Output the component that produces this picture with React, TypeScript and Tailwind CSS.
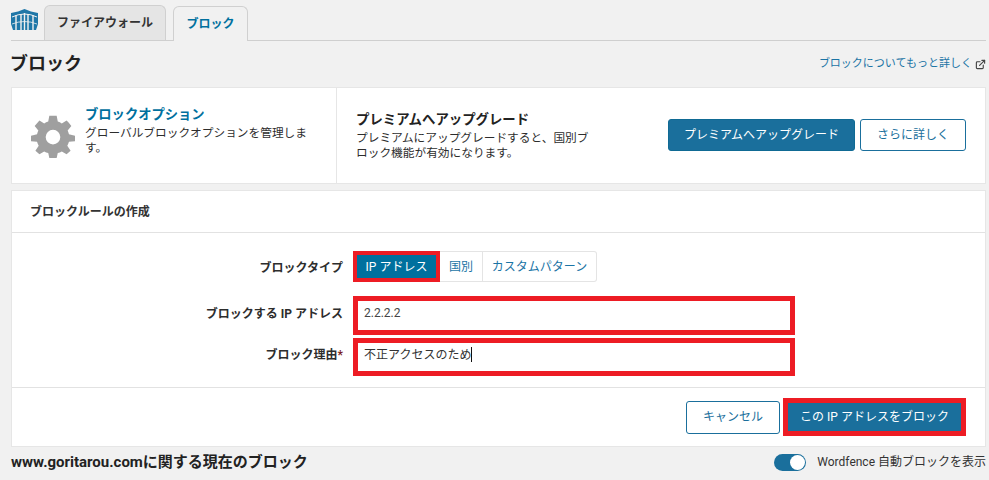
import React from 'react';
import { ExternalLink } from 'lucide-react';

const FONT = "font-['Roboto','Noto_Sans_CJK_JP',sans-serif]";

const Logo = () => (
    <svg width="27" height="22" viewBox="0 0 27 22" className="shrink-0">
        <path d="M0 4 L7 2.5 L13.5 0 L20 2.5 L27 4 L27 15 L25 21 L2 21 L0 15 Z" fill="#1f77a8" />
        <path d="M1 8 Q13.5 2 26 8" stroke="#f1f1f1" strokeWidth="1" fill="none" />
        <path d="M5 6 V21 M10 5 V21 M13.5 4 V21 M17 5 V21 M22 6 V21" stroke="#f1f1f1" strokeWidth="1.4" fill="none" />
        <path d="M1 15 Q13.5 10 26 15" stroke="#f1f1f1" strokeWidth="0.8" fill="none" />
    </svg>
);

const Gear = () => (
    <svg width="44" height="44" viewBox="0 0 24 24" className="shrink-0">
        <path
            fill="#9f9f9f"
            fillRule="evenodd"
            d="M10 1 H14 L14.6 4.1 C15.4 4.4 16.1 4.7 16.8 5.2 L19.4 3.5 L20.5 4.6 L22 6.6 L20 9 C20.3 9.7 20.6 10.4 20.7 11.1 L24 11.8 V13.2 L24 14.8 L20.7 15.2 C20.5 16 20.2 16.7 19.8 17.3 L21.6 20 L19.4 22 L16.8 20.4 C16.1 20.8 15.4 21.1 14.6 21.3 L14 24 H10 L9.4 21.3 C8.6 21.1 7.9 20.8 7.2 20.4 L4.6 22 L2.4 20 L4.2 17.3 C3.8 16.7 3.5 16 3.3 15.2 L0 14.8 V11.8 L3.3 11.1 C3.4 10.4 3.7 9.7 4 9 L2 6.6 L4.6 3.5 L7.2 5.2 C7.9 4.7 8.6 4.4 9.4 4.1 Z M12 8.6 A4 4 0 1 0 12 16.6 A4 4 0 1 0 12 8.6 Z"
        />
    </svg>
);

const App: React.FC = () => {
    return (
        <div className={`${FONT} w-[989px] h-[480px] overflow-hidden bg-[#f1f1f1] pl-[11px] pr-[3px] text-[12px] text-[#2d2d2d]`}>
            {/* tabs */}
            <div className="flex items-end h-[41px] border-b border-[#cfcfcf]">
                <div className="mb-[9px] mr-[6px]"><Logo /></div>
                <div className="w-[122px] h-[35px] mr-[7px] flex items-center justify-center rounded-t-md border border-b-0 border-[#d0d0d0] bg-[#e5e5e5] font-bold text-[#333]">ファイアウォール</div>
                <div className="w-[75px] h-[35px] -mb-px flex items-center justify-center rounded-t-md border border-b-0 border-[#d0d0d0] bg-[#f1f1f1] font-bold text-[#00709e]">ブロック</div>
            </div>

            {/* title */}
            <div className="flex items-center justify-between h-[46px]">
                <h1 className="text-[18px] font-bold text-[#222] -ml-px -mt-[2px]">ブロック</h1>
                <a className="flex items-center gap-[3px] text-[11px] text-[#1b74a5] mt-[1px]">
                    ブロックについてもっと詳しく
                    <ExternalLink size={11} strokeWidth={2.5} className="text-[#444]" />
                </a>
            </div>

            {/* options card */}
            <div className="flex h-[97px] bg-white border border-[#e6e6e6]">
                <div className="w-[325px] flex items-center border-r border-[#e6e6e6] pl-[19px]">
                    <Gear />
                    <div className="ml-[10px] w-[226px] -mt-[8px] leading-[15px]">
                        <div className="text-[13.3px] font-bold text-[#00709e] mb-[4px]">ブロックオプション</div>
                        <div className="text-[11.7px]">グローバルブロックオプションを管理します。</div>
                    </div>
                </div>
                <div className="flex-1 flex items-center pl-[19px] pr-[19px]">
                    <div className="w-[240px] leading-[15px] pt-[2px]">
                        <div className="text-[13.4px] font-bold text-[#222] mb-[4px]">プレミアムへアップグレード</div>
                        <div className="text-[11.7px]">プレミアムにアップグレードすると、国別ブロック機能が有効になります。</div>
                    </div>
                    <div className="ml-auto flex gap-[5px] -mt-[2px]">
                        <button className="w-[187px] h-[32px] rounded-[3px] border border-[#0f6a94] bg-[#1a6f9c] text-white">プレミアムへアップグレード</button>
                        <button className="w-[106px] h-[32px] rounded-[3px] border border-[#1a6f9c] bg-white text-[#1a6f9c]">さらに詳しく</button>
                    </div>
                </div>
            </div>

            {/* create rule card */}
            <div className="mt-[6px] h-[257px] flex flex-col bg-white border border-[#e6e6e6]">
                <div className="h-[42px] flex items-center pl-[18px] border-b border-[#e2e2e2] font-bold text-[#333]">ブロックルールの作成</div>

                <div className="flex-1 pt-[18px]">
                    <div className="flex items-center h-[31px]">
                        <div className="w-[331px] pt-[2px] text-right font-bold">ブロックタイプ</div>
                        <div className="ml-[10px] flex items-center h-[31px]">
                            <div className="w-[87px] h-[31px] border-[4px] border-[#ed1c24] bg-[#00709e] text-white flex items-center justify-center">IP アドレス</div>
                            <div className="flex h-[31px] rounded-r-[3px] border border-l-0 border-[#e4e4e4] text-[#1b74a5]">
                                <div className="w-[43px] flex items-center justify-center border-r border-[#e4e4e4]">国別</div>
                                <div className="w-[113px] flex items-center justify-center">カスタムパターン</div>
                            </div>
                        </div>
                    </div>

                    <div className="flex items-center h-[39px] mt-[14px]">
                        <div className="w-[331px] pb-[4px] text-right font-bold">ブロックする IP アドレス</div>
                        <div className="ml-[10px] w-[442px] h-[39px] border-[5px] border-[#ed1c24] pl-[6px] pb-[5px] flex items-center text-[#444]">2.2.2.2</div>
                    </div>

                    <div className="flex items-center h-[38px] mt-[3px]">
                        <div className="w-[331px] pb-[4px] text-right font-bold">ブロック理由<span className="text-[#7a1c1c]">*</span></div>
                        <div className="ml-[10px] w-[442px] h-[38px] border-[5px] border-[#ed1c24] pl-[6px] pb-[5px] flex items-center text-[#333]">
                            不正アクセスのため<span className="w-px h-[15px] bg-[#111]" />
                        </div>
                    </div>
                </div>

                <div className="h-[59px] flex items-center justify-end gap-[3px] pr-[19px] border-t border-[#e2e2e2]">
                    <button className="w-[94px] h-[33px] rounded-[3px] border border-[#1a6f9c] bg-white text-[#1a6f9c]">キャンセル</button>
                    <button className="w-[183px] h-[38px] border-[5px] border-[#ed1c24] bg-[#1a6f9c] text-white">この IP アドレスをブロック</button>
                </div>
            </div>

            {/* current blocks */}
            <div className="flex items-center justify-between h-[30px]">
                <h2 className="text-[15px] font-bold text-[#222]">www.goritarou.comに関する現在のブロック</h2>
                <div className="flex items-center gap-[11px]">
                    <div className="w-[32px] h-[17px] rounded-full bg-[#1a6f9c] flex items-center justify-end pr-[1px]">
                        <span className="w-[15px] h-[15px] rounded-full bg-white" />
                    </div>
                    <span className="text-[#333]">Wordfence 自動ブロックを表示</span>
                </div>
            </div>
        </div>
    );
};

export default App;
